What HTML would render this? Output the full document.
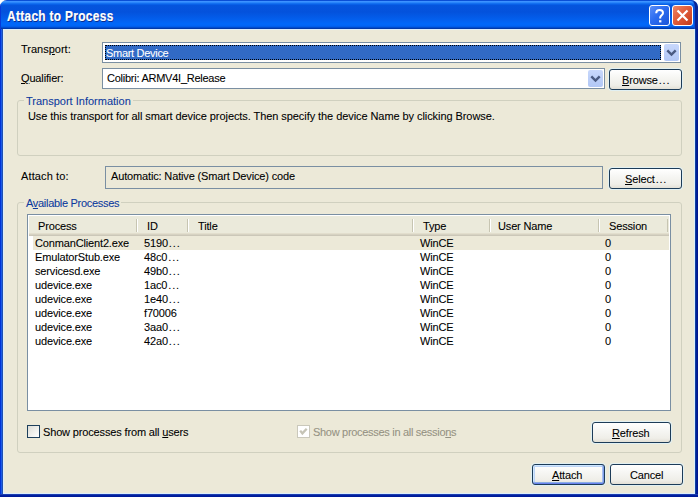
<!DOCTYPE html>
<html><head><meta charset="utf-8">
<style>
*{box-sizing:border-box}
html,body{margin:0;padding:0;width:698px;height:497px;overflow:hidden;background:#fff}
body{position:relative;font-family:"Liberation Sans",sans-serif;font-size:11px;line-height:13px;color:#000}
.a{position:absolute}
.t{position:absolute;white-space:pre;font-size:11px;line-height:13px;letter-spacing:-0.15px;-webkit-text-stroke:0.08px currentColor}
#win{left:0;top:0;width:698px;height:497px;background:#ECE9D8;border-radius:7px 7px 0 0;overflow:hidden}
#title{left:0;top:0;width:698px;height:29px;background:linear-gradient(to bottom,#0A4FD6 0px,#0A4FD6 1px,#3C92FF 1px,#3C92FF 2px,#2A86FA 2px,#2A86FA 3px,#1470F0 3px,#1470F0 4px,#0860E8 4px,#0860E8 5px,#0555DD 5px,#0452DC 12px,#035EEC 19px,#0068FA 24px,#0064F4 26px,#0058E4 27px,#0042B8 28px,#00309A 29px)}
#fl{left:0;top:29px;width:3px;height:468px;background:linear-gradient(to right,#0033D6 0,#0033D6 1px,#1B5AE6 1px,#1B5AE6 2px,#2050B0 2px)}
#fr{left:695px;top:29px;width:3px;height:468px;background:linear-gradient(to right,#1040A0 0,#1040A0 1px,#00209A 1px,#00209A 2px,#001890 2px)}
#fb{left:0;top:494px;width:698px;height:3px;background:linear-gradient(to bottom,#1C3CB0 0,#1C3CB0 1px,#0020A0 1px,#0020A0 2px,#001A98 2px)}
.hl{background:#DDEEFA}
.ttl{position:absolute;left:7px;top:10px;font-weight:bold;font-size:13px;line-height:13px;color:#fff;letter-spacing:0.35px;white-space:pre;text-shadow:1px 1px 0 #0A2A8A;-webkit-text-stroke:0.2px #fff;transform:scale(0.915,1.1);transform-origin:0 11px}
.grp{position:absolute;border:1px solid #D0D0BF;border-radius:3px}
.glbl{position:absolute;white-space:pre;color:#0D3A9E;background:#ECE9D8;padding:0 2px 0 2px;font-size:11px;line-height:13px;letter-spacing:-0.15px;-webkit-text-stroke:0.08px currentColor}
.edit{position:absolute;border:1px solid #7A8FA2;background:#fff}
.btn{position:absolute;border:1px solid #1D3C58;box-shadow:0 0 0 1px rgba(222,242,252,0.75);border-radius:3px;background:linear-gradient(to bottom,#FFFFFF 0%,#F6F6F3 40%,#EFEEE8 80%,#E3E0D6 100%)}
.btn.def{box-shadow:0 0 0 1px rgba(222,242,252,0.75),inset 0 -1px 0 #6982EE,inset -1px 0 0 #7E9CEA,inset 0 1px 0 #CEE7FF,inset 1px 0 0 #CEE7FF,inset 0 -2px 0 #89ADE4,inset -2px 0 0 #A6C0F0,inset 0 2px 0 #BCD4F6,inset 2px 0 0 #BCD4F6}
.dd{position:absolute;width:15px;height:17px;border-radius:2px;background:linear-gradient(to bottom,#C8D8FC 0%,#BCCFF8 50%,#B2C8F6 100%)}
.u{text-decoration:underline}
</style></head><body>
<div id="win" class="a">
  <div id="title" class="a"></div>
  <div class="ttl">Attach to Process</div>
  <div class="a" style="left:0;top:3px;width:1px;height:26px;background:#0638D8"></div>
  <div class="a" style="left:694px;top:4px;width:1px;height:25px;background:#0A4ED8"></div>
  <div class="a" style="left:670px;top:0;width:28px;height:40px;border-right:3px solid #0A2494;border-top:1px solid #0A48D0;border-top-right-radius:7px"></div>
  <div id="fl" class="a"></div>
  <div id="fr" class="a"></div>
  <div id="fb" class="a"></div>

  <!-- light inner lines -->
  <div class="a hl" style="left:3px;top:29px;width:692px;height:1px"></div>
  <div class="a hl" style="left:3px;top:29px;width:1px;height:465px"></div>
  <div class="a hl" style="left:694px;top:29px;width:1px;height:465px"></div>
  <div class="a hl" style="left:3px;top:493px;width:692px;height:1px"></div>

  <!-- title buttons -->
  <div class="a" style="left:649px;top:5px;width:21px;height:21px;border:1px solid #fff;border-radius:3px;background:linear-gradient(135deg,#5A8EF8 0%,#2C6CF0 45%,#1A55D8 100%)"></div>
  <svg class="a" style="left:649px;top:5px" width="21" height="21" viewBox="0 0 21 21"><path d="M7.2 8.2 C7.2 6 8.6 4.9 10.6 4.9 C12.6 4.9 14 6 14 7.9 C14 10.1 11.2 10.4 11.2 12.6 L11.2 13.6" fill="none" stroke="#fff" stroke-width="2"/><rect x="10.1" y="15.2" width="2.3" height="2.2" fill="#fff"/></svg>
  <div class="a" style="left:672px;top:5px;width:21px;height:21px;border:1px solid #fff;border-radius:3px;background:linear-gradient(135deg,#EE8666 0%,#E2603F 40%,#D24A28 75%,#BF3A1C 100%)"></div>
  <svg class="a" style="left:672px;top:5px" width="21" height="21" viewBox="0 0 21 21"><path d="M5.5 5.5 L15.5 15.5 M15.5 5.5 L5.5 15.5" stroke="#fff" stroke-width="2.2"/></svg>

  <!-- Transport -->
  <div class="t" style="left:21px;top:43px;letter-spacing:0px">Trans<span class="u">p</span>ort:</div>
  <div class="edit" style="left:102px;top:42px;width:579px;height:21px"></div>
  <div class="a" style="left:105px;top:45px;width:556px;height:15px;background:#316AC5;outline:1px dotted #000;outline-offset:-1px"></div>
  <div class="t" style="left:106px;top:47px;color:#fff;letter-spacing:-0.3px">Smart Device</div>
  <div class="dd" style="left:664px;top:44px"></div>
  <svg class="a" style="left:664px;top:44px" width="15" height="17"><path d="M3.3 6.3 L7.5 10.5 L11.7 6.3" fill="none" stroke="#4A5B82" stroke-width="2.4"/></svg>

  <!-- Qualifier -->
  <div class="t" style="left:21px;top:72px"><span class="u">Q</span>ualifier:</div>
  <div class="edit" style="left:102px;top:68px;width:503px;height:21px"></div>
  <div class="t" style="left:107px;top:72px;letter-spacing:-0.25px">Colibri: ARMV4I_Release</div>
  <div class="dd" style="left:588px;top:70px"></div>
  <svg class="a" style="left:588px;top:70px" width="15" height="17"><path d="M3.3 6.3 L7.5 10.5 L11.7 6.3" fill="none" stroke="#4A5B82" stroke-width="2.4"/></svg>
  <div class="btn" style="left:609px;top:69px;width:73px;height:21px"></div>
  <div class="t" style="left:622px;top:74px"><span class="u">B</span>rows<span style="letter-spacing:0.8px">e...</span></div>

  <!-- Transport Information group -->
  <div class="grp" style="left:17px;top:100px;width:665px;height:56px"></div>
  <div class="glbl" style="left:24px;top:95px;letter-spacing:0px">Transport Information</div>
  <div class="t" style="left:28px;top:110px;letter-spacing:-0.07px">Use this transport for all smart device projects. Then specify the device Name by clicking Browse.</div>

  <!-- Attach to -->
  <div class="t" style="left:21px;top:170px;letter-spacing:0.12px">Attach to:</div>
  <div class="a" style="left:105px;top:166px;width:498px;height:23px;border:1px solid #7A8FA2;background:#ECE9D8"></div>
  <div class="t" style="left:111px;top:170px">Automatic: Native (Smart Device) code</div>
  <div class="btn" style="left:609px;top:168px;width:73px;height:21px"></div>
  <div class="t" style="left:625px;top:173px"><span class="u">S</span>elec<span style="letter-spacing:0.8px">t...</span></div>

  <!-- Available Processes group -->
  <div class="grp" style="left:17px;top:202px;width:665px;height:251px"></div>
  <div class="glbl" style="left:24px;top:197px;letter-spacing:-0.3px">A<span class="u">v</span>ailable Processes</div>

  <!-- ListView -->
  <div class="a" style="left:27px;top:214px;width:644px;height:197px;border:1px solid #7A8FA2;background:#fff"></div>
  <div class="a" style="left:29px;top:216px;width:640px;height:20px;background:linear-gradient(to bottom,#EBEADB 0,#EBEADB 17px,#E2DECD 17px,#E2DECD 18px,#D6D2C2 18px,#D6D2C2 19px,#CBC7B8 19px)"></div>
  <div class="t" style="left:38px;top:220px">Process</div>
  <div class="t" style="left:147px;top:220px">ID</div>
  <div class="t" style="left:198px;top:220px">Title</div>
  <div class="t" style="left:423px;top:220px">Type</div>
  <div class="t" style="left:498px;top:220px">User Name</div>
  <div class="t" style="left:609px;top:220px">Session</div>
  <div class="a" style="left:136px;top:219px;width:2px;height:13px;background:linear-gradient(to right,#C7C5B2 1px,#FFFFFF 1px)"></div>
  <div class="a" style="left:187px;top:219px;width:2px;height:13px;background:linear-gradient(to right,#C7C5B2 1px,#FFFFFF 1px)"></div>
  <div class="a" style="left:412px;top:219px;width:2px;height:13px;background:linear-gradient(to right,#C7C5B2 1px,#FFFFFF 1px)"></div>
  <div class="a" style="left:489px;top:219px;width:2px;height:13px;background:linear-gradient(to right,#C7C5B2 1px,#FFFFFF 1px)"></div>
  <div class="a" style="left:598px;top:219px;width:2px;height:13px;background:linear-gradient(to right,#C7C5B2 1px,#FFFFFF 1px)"></div>
  <div class="a" style="left:667px;top:219px;width:1px;height:13px;background:#C7C5B2"></div>
  <div class="a" style="left:33px;top:236px;width:636px;height:14px;background:#ECE9D8"></div>
  <div class="t" style="left:35px;top:237px">ConmanClient2.exe</div><div class="t" style="left:144px;top:237px">519<span style="letter-spacing:0.85px">0...</span></div><div class="t" style="left:420px;top:237px">WinCE</div><div class="t" style="left:605px;top:237px">0</div>
  <div class="t" style="left:35px;top:251px">EmulatorStub.exe</div><div class="t" style="left:144px;top:251px">48c<span style="letter-spacing:0.85px">0...</span></div><div class="t" style="left:420px;top:251px">WinCE</div><div class="t" style="left:605px;top:251px">0</div>
  <div class="t" style="left:35px;top:265px">servicesd.exe</div><div class="t" style="left:144px;top:265px">49b<span style="letter-spacing:0.85px">0...</span></div><div class="t" style="left:420px;top:265px">WinCE</div><div class="t" style="left:605px;top:265px">0</div>
  <div class="t" style="left:35px;top:279px">udevice.exe</div><div class="t" style="left:144px;top:279px">1ac<span style="letter-spacing:0.85px">0...</span></div><div class="t" style="left:420px;top:279px">WinCE</div><div class="t" style="left:605px;top:279px">0</div>
  <div class="t" style="left:35px;top:293px">udevice.exe</div><div class="t" style="left:144px;top:293px">1e4<span style="letter-spacing:0.85px">0...</span></div><div class="t" style="left:420px;top:293px">WinCE</div><div class="t" style="left:605px;top:293px">0</div>
  <div class="t" style="left:35px;top:307px">udevice.exe</div><div class="t" style="left:144px;top:307px">f70006</div><div class="t" style="left:420px;top:307px">WinCE</div><div class="t" style="left:605px;top:307px">0</div>
  <div class="t" style="left:35px;top:321px">udevice.exe</div><div class="t" style="left:144px;top:321px">3aa<span style="letter-spacing:0.85px">0...</span></div><div class="t" style="left:420px;top:321px">WinCE</div><div class="t" style="left:605px;top:321px">0</div>
  <div class="t" style="left:35px;top:335px">udevice.exe</div><div class="t" style="left:144px;top:335px">42a<span style="letter-spacing:0.85px">0...</span></div><div class="t" style="left:420px;top:335px">WinCE</div><div class="t" style="left:605px;top:335px">0</div>

  <!-- checkboxes -->
  <div class="a" style="left:27px;top:425px;width:13px;height:13px;border:1px solid #1D3F5C;background:linear-gradient(135deg,#DCDCD7 0%,#F2F2EE 60%,#FFFFFF 100%)"></div>
  <div class="t" style="left:43px;top:426px">Show processes from all <span class="u">u</span>sers</div>
  <div class="a" style="left:297px;top:425px;width:13px;height:13px;border:1px solid #CAC8BB;background:#fff"></div>
  <svg class="a" style="left:298px;top:426px" width="11" height="11"><path d="M2.2 4.6 L4.4 7.4 L8.7 2.8" fill="none" stroke="#C6C4B6" stroke-width="2.3"/></svg>
  <div class="t" style="left:313px;top:426px;color:#959283;letter-spacing:-0.3px">Show processes in all sessio<span class="u">n</span>s</div>
  <div class="btn" style="left:592px;top:422px;width:79px;height:21px"></div>
  <div class="t" style="left:612px;top:427px"><span class="u">R</span>efresh</div>

  <!-- bottom buttons -->
  <div class="btn def" style="left:532px;top:464px;width:73px;height:21px"></div>
  <div class="t" style="left:552px;top:469px"><span class="u">A</span>ttach</div>
  <div class="btn" style="left:610px;top:464px;width:73px;height:21px"></div>
  <div class="t" style="left:630px;top:469px">Cancel</div>
</div>
</body></html>
